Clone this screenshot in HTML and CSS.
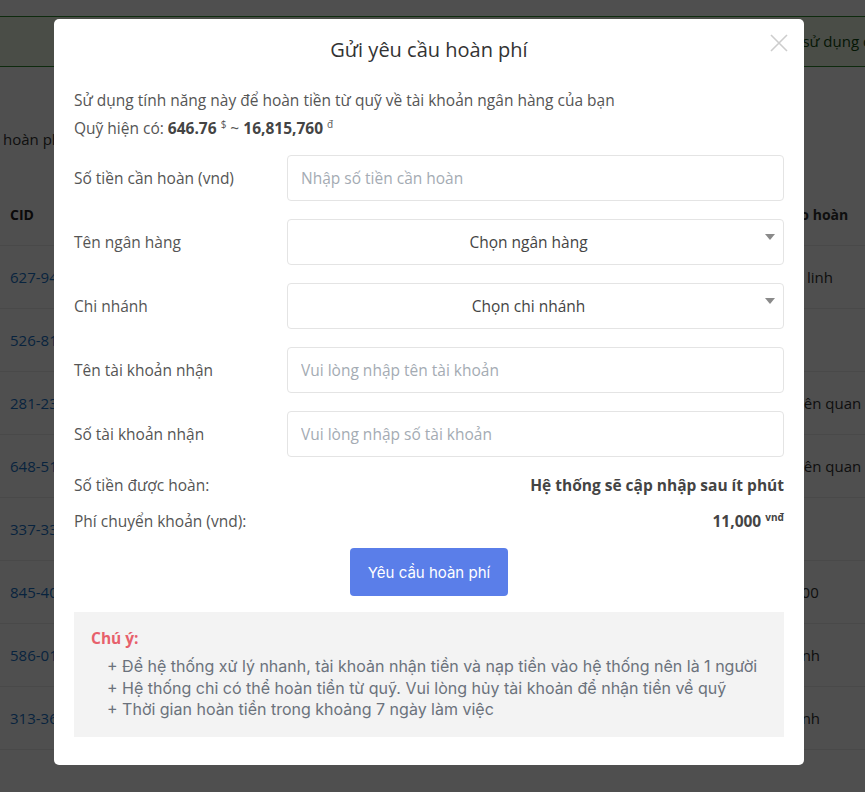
FILE: index.html
```html
<!DOCTYPE html>
<html lang="vi">
<head>
    <meta charset="UTF-8">
    <meta name="viewport" content="width=device-width, initial-scale=1.0">
    <title>Gửi yêu cầu hoàn phí</title>
    <link rel="stylesheet" href="styles.css">
</head>
<body>

    <div class="page">
        <div class="notice">Quỹ hoàn phí chỉ áp dụng cho các tài khoản đã đăng ký sử dụng dịch vụ</div>
        <div class="page-title">hoàn phí của bạn</div>

        <div class="table">
            <div class="row head"><span class="cid">CID</span><span class="last">Lý do hoàn</span></div>
            <div class="row"><span class="cid">627-941-2210</span><span class="last">Thất linh</span></div>
            <div class="row"><span class="cid">526-812-4409</span><span class="last"></span></div>
            <div class="row"><span class="cid">281-233-7781</span><span class="last">Tài liên quan</span></div>
            <div class="row"><span class="cid">648-512-0093</span><span class="last">Tài liên quan</span></div>
            <div class="row"><span class="cid">337-331-2054</span><span class="last"></span></div>
            <div class="row"><span class="cid">845-407-6612</span><span class="last">20,000</span></div>
            <div class="row"><span class="cid">586-019-3347</span><span class="last">Tư linh</span></div>
            <div class="row"><span class="cid">313-360-8825</span><span class="last">Tư linh</span></div>
        </div>
    </div>

    <div class="overlay">
        <div class="modal">
            <div class="modal-header">
                <h3>Gửi yêu cầu hoàn phí</h3>
                <button class="close" type="button" aria-label="Đóng">
                    <svg width="18" height="18" viewBox="0 0 18 18"><path d="M1 1L17 17M17 1L1 17" stroke="#cdcdcd" stroke-width="1.6" fill="none"/></svg>
                </button>
            </div>

            <div class="modal-body">
                <p class="desc">Sử dụng tính năng này để hoàn tiền từ quỹ về tài khoản ngân hàng của bạn</p>
                <p class="desc">Quỹ hiện có: <b>646.76</b> <sup>$</sup> ~ <b>16,815,760</b> <sup>đ</sup></p>

                <form class="refund-form">
                    <label>Số tiền cần hoàn (vnd)</label>
                    <input type="text" placeholder="Nhập số tiền cần hoàn">

                    <label>Tên ngân hàng</label>
                    <div class="select"><span>Chọn ngân hàng</span><i class="caret"></i></div>

                    <label>Chi nhánh</label>
                    <div class="select"><span>Chọn chi nhánh</span><i class="caret"></i></div>

                    <label>Tên tài khoản nhận</label>
                    <input type="text" placeholder="Vui lòng nhập tên tài khoản">

                    <label>Số tài khoản nhận</label>
                    <input type="text" placeholder="Vui lòng nhập số tài khoản">
                </form>

                <div class="summary">
                    <div class="line"><span>Số tiền được hoàn:</span><b>Hệ thống sẽ cập nhập sau ít phút</b></div>
                    <div class="line"><span>Phí chuyển khoản (vnd):</span><b>11,000 <sup>vnđ</sup></b></div>
                </div>

                <div class="actions">
                    <button type="button" class="submit">Yêu cầu hoàn phí</button>
                </div>

                <div class="note">
                    <div class="note-title">Chú ý:</div>
                    <ul>
                        <li>+ Để hệ thống xử lý nhanh, tài khoản nhận tiền và nạp tiền vào hệ thống nên là 1 người</li>
                        <li>+ Hệ thống chỉ có thể hoàn tiền từ quỹ. Vui lòng hủy tài khoản để nhận tiền về quỹ</li>
                        <li>+ Thời gian hoàn tiền trong khoảng 7 ngày làm việc</li>
                    </ul>
                </div>
            </div>
        </div>
    </div>

</body>
</html>
```

FILE: styles.css
```css
body {
    margin: 0;
    font-family: "Open Sans", Arial, sans-serif;
    font-size: 15.5px;
    color: #333;
    background: #fff;
}
.page {
    padding-top: 16px;
    overflow: hidden;
    height: 792px;
    font-size: 15px;
}
.notice {
    height: 49px;
    line-height: 49px;
    border-top: 1px solid #2e8b2e;
    border-bottom: 1px solid #2e8b2e;
    background: #eef7e6;
    color: #0f4a0f;
    white-space: nowrap;
    padding-left: 415px;
}
.page-title {
    margin-top: 62px;
    padding-left: 3px;
    color: #333;
}
.table {
    margin-top: 34px;
}
.row {
    display: flex;
    height: 62px;
    align-items: center;
    border-bottom: 1px solid #eaeaea;
    white-space: nowrap;
}
.row.head {
    font-weight: 700;
    font-size: 14px;
    color: #222;
}
.cid {
    width: 762px;
    padding-left: 10px;
    color: #1a73c8;
}
.head .cid {
    color: #222;
}
.last {
    color: #333;
}
.overlay {
    position: fixed;
    inset: 0;
    background: rgba(0, 0, 0, 0.69);
    display: flex;
    justify-content: center;
    align-items: flex-start;
    padding-top: 19px;
    padding-right: 7px;
}
.modal {
    width: 750px;
    background: #fff;
    border-radius: 5px;
    position: relative;
}
.modal-header {
    padding-top: 18px;
}
.modal-header h3 {
    margin: 0;
    text-align: center;
    font-size: 20px;
    font-weight: 400;
    line-height: 26px;
    color: #333;
}
.close {
    position: absolute;
    top: 15px;
    right: 16px;
    border: none;
    background: none;
    padding: 0;
    cursor: pointer;
}
.modal-body {
    padding: 23px 20px 28px 20px;
}
.desc {
    margin: 0;
    line-height: 28px;
    color: #555;
}
.desc b {
    color: #444;
}
sup {
    font-size: 10px;
    vertical-align: 6px;
    line-height: 0;
}
.refund-form {
    margin-top: 13px;
    display: grid;
    grid-template-columns: 213px 1fr;
    grid-auto-rows: 46px;
    row-gap: 18px;
    align-items: center;
}
.refund-form label {
    color: #555;
}
.refund-form input,
.select {
    height: 46px;
    box-sizing: border-box;
    border: 1px solid #e4e4e4;
    border-radius: 4px;
    font-family: "Open Sans", Arial, sans-serif;
    font-size: 15.5px;
}
.refund-form input {
    width: 100%;
    padding: 0 13px;
    color: #333;
}
.refund-form input::placeholder {
    color: #a4abb3;
}
.select {
    display: flex;
    align-items: center;
    justify-content: center;
    position: relative;
    color: #444;
    padding-right: 14px;
}
.caret {
    position: absolute;
    right: 8px;
    top: 14px;
    border-left: 5px solid transparent;
    border-right: 5px solid transparent;
    border-top: 6px solid #8a8a8a;
}
.summary {
    margin-top: 14px;
    display: flex;
    flex-direction: column;
    gap: 8px;
}
.summary .line {
    display: flex;
    justify-content: space-between;
    line-height: 28px;
    color: #555;
}
.summary b {
    color: #444;
}
.actions {
    margin-top: 13px;
    text-align: center;
}
.submit {
    width: 158px;
    height: 48px;
    background: #5a7ee9;
    color: #fff;
    border: none;
    border-radius: 4px;
    font-family: Inter, Arial, sans-serif;
    font-size: 15px;
    cursor: pointer;
}
.note {
    margin-top: 16px;
    background: #f3f3f3;
    padding: 15px 17px 16px 17px;
}
.note-title {
    color: #e7606b;
    font-weight: 700;
    line-height: 22px;
}
.note ul {
    list-style: none;
    margin: 7px 0 0 0;
    padding-left: 16px;
    font-family: Inter, Arial, sans-serif;
    font-size: 16px;
    color: #6b727c;
    line-height: 21.5px;
}
```
